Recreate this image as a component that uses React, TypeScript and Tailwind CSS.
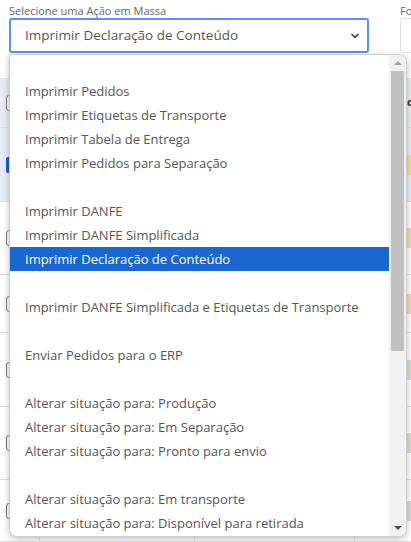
import { ChevronDown } from "lucide-react"

const options: string[] = [
  "",
  "Imprimir Pedidos",
  "Imprimir Etiquetas de Transporte",
  "Imprimir Tabela de Entrega",
  "Imprimir Pedidos para Separação",
  "",
  "Imprimir DANFE",
  "Imprimir DANFE Simplificada",
  "Imprimir Declaração de Conteúdo",
  "",
  "Imprimir DANFE Simplificada e Etiquetas de Transporte",
  "",
  "Enviar Pedidos para o ERP",
  "",
  "Alterar situação para: Produção",
  "Alterar situação para: Em Separação",
  "Alterar situação para: Pronto para envio",
  "",
  "Alterar situação para: Em transporte",
  "Alterar situação para: Disponível para retirada",
]

const selected = "Imprimir Declaração de Conteúdo"

// rows of the orders table behind the open menu
const rows = [
  { h: "h-[50px]", bg: "bg-[#e9ebee]", badge: "" },
  { h: "h-[74px]", bg: "bg-[#e8ecf6]", badge: "bg-[#f1dc9a]", active: true },
  { h: "h-[73px]", bg: "bg-white", badge: "bg-[#f1dc9a]" },
  { h: "h-[58px]", bg: "bg-white", badge: "bg-[#f1dc9a]" },
  { h: "h-[74px]", bg: "bg-white", badge: "bg-[#cfe3c4]" },
  { h: "h-[73px]", bg: "bg-white", badge: "bg-[#cfe3c4]" },
  { h: "h-[62px]", bg: "bg-white", badge: "bg-[#cfe3c4]" },
]

export default function App() {
  return (
    <div className="relative h-[542px] w-[411px] overflow-hidden bg-white font-['Open_Sans',sans-serif] text-[#555]">
      {/* FILTER BAR */}
      <div className="flex h-[78px] gap-[31px] pl-[9px]">
        <div className="flex w-[360px] shrink-0 flex-col">
          <label className="h-[18px] pt-[4px] text-[11px] leading-[13px] text-[#666]">Selecione uma Ação em Massa</label>
          <div className="flex h-[35px] items-center justify-between rounded-[3px] border-2 border-[#5b8ff5] pr-[6px] pl-[14px] text-[13.5px]">
            <span>{selected}</span>
            <ChevronDown className="h-[12px] w-[12px] text-[#444]" strokeWidth={3.5} />
          </div>
        </div>
        <div className="flex w-[60px] shrink-0 flex-col">
          <span className="h-[18px] pt-[4px] text-[11px] leading-[13px] text-[#666]">Fo</span>
          <div className="h-[35px] w-[60px] rounded-[3px] border border-[#ddd]" />
        </div>
      </div>

      {/* TABLE BEHIND */}
      <div className="flex flex-col">
        {rows.map((r, i) => (
          <div key={i} className={`relative flex items-center border-b border-[#dedede] ${r.h} ${r.bg}`}>
            {r.active && <div className="absolute left-[6px] top-[29px] h-[16px] w-[4px] rounded-sm bg-[#1a5fe0]" />}
            <div className="ml-[6px] h-[16px] w-[10px] rounded-[3px] border border-[#777] bg-white" />
            <div className="ml-auto flex h-full w-[4px] items-center overflow-hidden">
              {r.badge && <div className={`h-[20px] w-[4px] shrink-0 ${r.badge}`} />}
              {i === 0 && <span className="text-[11px] font-bold text-[#333]">c</span>}
            </div>
          </div>
        ))}
      </div>
      <div className="absolute bottom-0 left-0 flex h-[6px] w-full">
        <div className="w-[40px] border-r border-[#e2e2e2]" />
        <div className="w-[155px] border-r border-[#e2e2e2]" />
        <div className="w-[160px] border-r border-[#e2e2e2]" />
      </div>

      {/* OPEN MENU */}
      <div className="absolute left-[9px] top-[54px] flex h-[483px] w-[398px] overflow-hidden rounded-b-[8px] rounded-tr-[8px] border border-[#cfcfcf] bg-white shadow-[0_2px_6px_rgba(0,0,0,0.25)]">
        <ul className="flex-1 text-[13px]">
          {options.map((o, i) => (
            <li
              key={i}
              className={`h-[24px] truncate pl-[15px] leading-[24px] ${o === selected ? "bg-[#1967d2] text-white" : ""}`}
            >
              {o}
            </li>
          ))}
        </ul>
        <div className="flex w-[17px] flex-col bg-[#f1f1f1]">
          <div className="flex h-[16px] items-center justify-center">
            <div className="h-0 w-0 border-x-[4px] border-b-[4px] border-x-transparent border-b-[#a3a3a3]" />
          </div>
          <div className="mx-[2px] h-[280px] bg-[#c1c1c1]" />
          <div className="flex-1" />
          <div className="flex h-[16px] items-center justify-center">
            <div className="h-0 w-0 border-x-[4px] border-t-[4px] border-x-transparent border-t-[#505050]" />
          </div>
        </div>
      </div>
    </div>
  )
}
